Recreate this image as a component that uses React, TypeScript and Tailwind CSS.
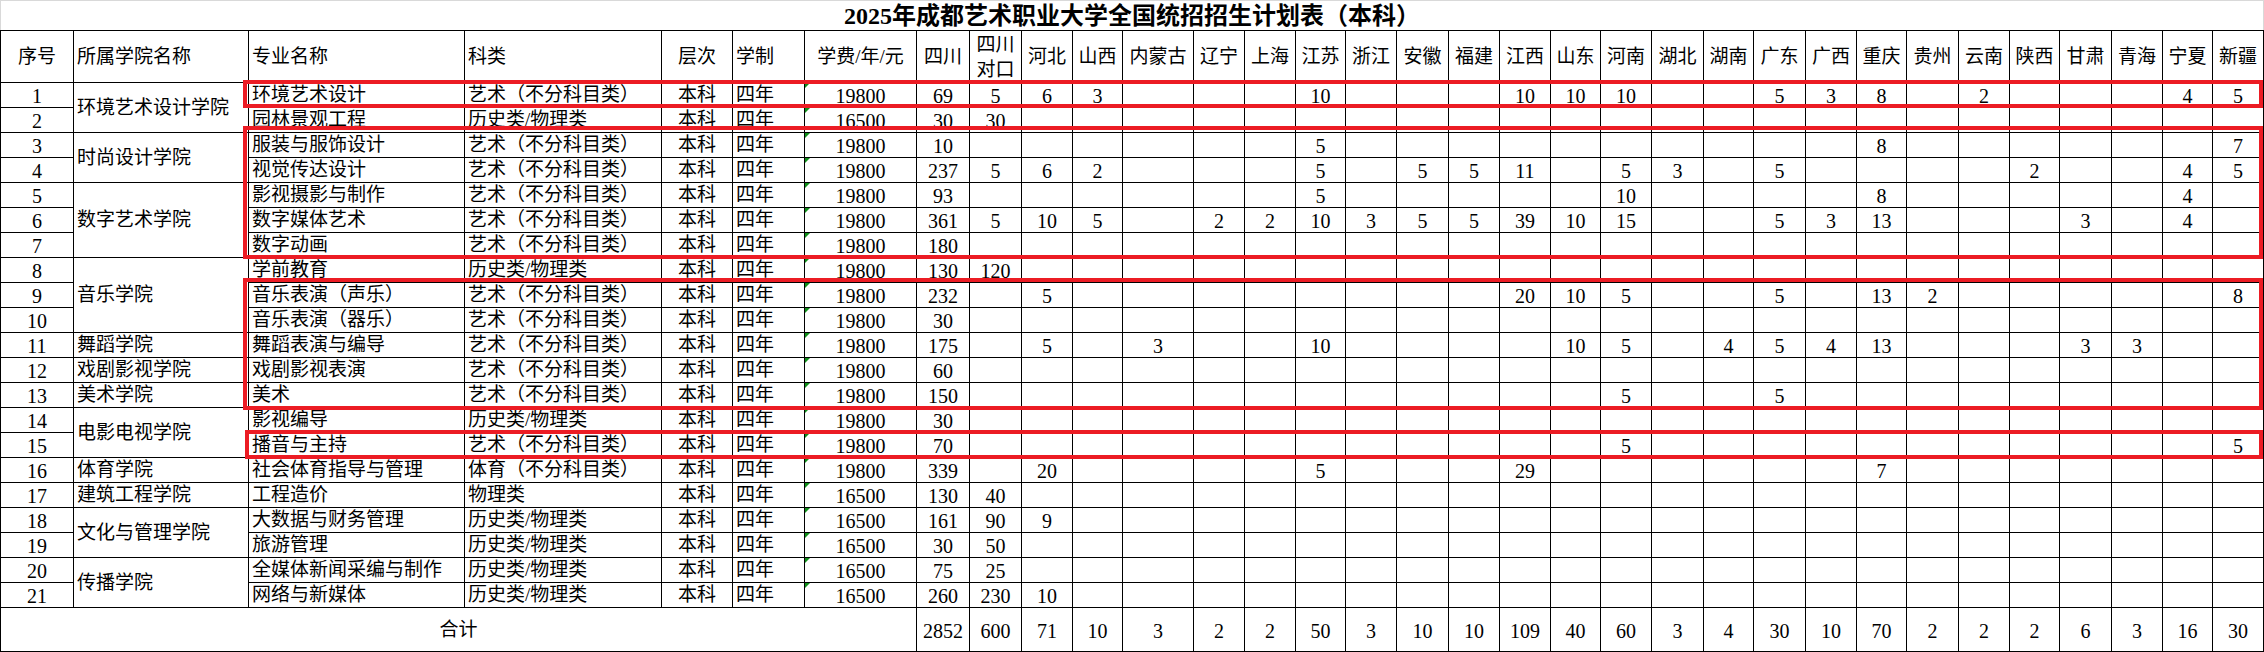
import React from 'react';

const REGIONS = ['河北', '山西', '内蒙古', '辽宁', '上海', '江苏', '浙江', '安徽', '福建', '江西', '山东', '河南', '湖北', '湖南', '广东', '广西', '重庆', '贵州', '云南', '陕西', '甘肃', '青海', '宁夏', '新疆'];

type Row = {
  n: number;
  college?: [string, number];
  major: string;
  type: string;
  fee: string;
  sc?: number;
  dk?: number;
  r?: Record<string, number>;
};

const ART = '艺术（不分科目类）';
const HP = '历史类/物理类';

const ROWS: Row[] = [
  { n: 1, college: ['环境艺术设计学院', 2], major: '环境艺术设计', type: ART, fee: '19800', sc: 69, dk: 5, r: { 河北: 6, 山西: 3, 江苏: 10, 江西: 10, 山东: 10, 河南: 10, 广东: 5, 广西: 3, 重庆: 8, 云南: 2, 宁夏: 4, 新疆: 5 } },
  { n: 2, major: '园林景观工程', type: HP, fee: '16500', sc: 30, dk: 30 },
  { n: 3, college: ['时尚设计学院', 2], major: '服装与服饰设计', type: ART, fee: '19800', sc: 10, r: { 江苏: 5, 重庆: 8, 新疆: 7 } },
  { n: 4, major: '视觉传达设计', type: ART, fee: '19800', sc: 237, dk: 5, r: { 河北: 6, 山西: 2, 江苏: 5, 安徽: 5, 福建: 5, 江西: 11, 河南: 5, 湖北: 3, 广东: 5, 陕西: 2, 宁夏: 4, 新疆: 5 } },
  { n: 5, college: ['数字艺术学院', 3], major: '影视摄影与制作', type: ART, fee: '19800', sc: 93, r: { 江苏: 5, 河南: 10, 重庆: 8, 宁夏: 4 } },
  { n: 6, major: '数字媒体艺术', type: ART, fee: '19800', sc: 361, dk: 5, r: { 河北: 10, 山西: 5, 辽宁: 2, 上海: 2, 江苏: 10, 浙江: 3, 安徽: 5, 福建: 5, 江西: 39, 山东: 10, 河南: 15, 广东: 5, 广西: 3, 重庆: 13, 甘肃: 3, 宁夏: 4 } },
  { n: 7, major: '数字动画', type: ART, fee: '19800', sc: 180 },
  { n: 8, college: ['音乐学院', 3], major: '学前教育', type: HP, fee: '19800', sc: 130, dk: 120 },
  { n: 9, major: '音乐表演（声乐）', type: ART, fee: '19800', sc: 232, r: { 河北: 5, 江西: 20, 山东: 10, 河南: 5, 广东: 5, 重庆: 13, 贵州: 2, 新疆: 8 } },
  { n: 10, major: '音乐表演（器乐）', type: ART, fee: '19800', sc: 30 },
  { n: 11, college: ['舞蹈学院', 1], major: '舞蹈表演与编导', type: ART, fee: '19800', sc: 175, r: { 河北: 5, 内蒙古: 3, 江苏: 10, 山东: 10, 河南: 5, 湖南: 4, 广东: 5, 广西: 4, 重庆: 13, 甘肃: 3, 青海: 3 } },
  { n: 12, college: ['戏剧影视学院', 1], major: '戏剧影视表演', type: ART, fee: '19800', sc: 60 },
  { n: 13, college: ['美术学院', 1], major: '美术', type: ART, fee: '19800', sc: 150, r: { 河南: 5, 广东: 5 } },
  { n: 14, college: ['电影电视学院', 2], major: '影视编导', type: HP, fee: '19800', sc: 30 },
  { n: 15, major: '播音与主持', type: ART, fee: '19800', sc: 70, r: { 河南: 5, 新疆: 5 } },
  { n: 16, college: ['体育学院', 1], major: '社会体育指导与管理', type: '体育（不分科目类）', fee: '19800', sc: 339, r: { 河北: 20, 江苏: 5, 江西: 29, 重庆: 7 } },
  { n: 17, college: ['建筑工程学院', 1], major: '工程造价', type: '物理类', fee: '16500', sc: 130, dk: 40 },
  { n: 18, college: ['文化与管理学院', 2], major: '大数据与财务管理', type: HP, fee: '16500', sc: 161, dk: 90, r: { 河北: 9 } },
  { n: 19, major: '旅游管理', type: HP, fee: '16500', sc: 30, dk: 50 },
  { n: 20, college: ['传播学院', 2], major: '全媒体新闻采编与制作', type: HP, fee: '16500', sc: 75, dk: 25 },
  { n: 21, major: '网络与新媒体', type: HP, fee: '16500', sc: 260, dk: 230, r: { 河北: 10 } },
];

const TOTALS = [2852, 600, 71, 10, 3, 2, 2, 50, 3, 10, 10, 109, 40, 60, 3, 4, 30, 10, 70, 2, 2, 2, 6, 3, 16, 30];

const B = 'border-r border-b border-black flex items-center overflow-hidden whitespace-nowrap';
const TXT = `${B} text-[19px] leading-[22px]`;
const TXT_L = `${TXT} pl-[3px]`;
const TXT_C = `${TXT} justify-center`;
const NUM = `${B} justify-center text-[20px] leading-[22px] pt-[2px]`;

function Mark() {
  return <span className="absolute left-0 top-0 w-0 h-0 border-t-[5px] border-r-[5px] border-t-[#0f8f1a] border-r-transparent" />;
}

function RedBox({ cls }: { cls: string }) {
  return <div className={`absolute border-4 border-[#ec1c24] pointer-events-none ${cls}`} />;
}

export default function App() {
  return (
    <div className="relative w-[2264px] h-[652px] bg-white text-black overflow-hidden [text-spacing-trim:space-all] font-['Liberation_Serif','Noto_Sans_CJK_SC',serif]">
      <div className="h-[30px] border-t border-x border-[#d9d9d9] flex items-center justify-center text-[24px] font-bold leading-[28px] pt-[1px]">
        2025年成都艺术职业大学全国统招招生计划表（本科）
      </div>
      <div className="grid border-t border-l border-black grid-cols-[73px_175px_216px_197px_71px_72px_112px_53px_52px_51px_50px_71px_51px_51px_50px_51px_52px_51px_51px_50px_51px_52px_50px_52px_51px_50px_52px_51px_50px_52px_51px_50px_51px] grid-rows-[52px_repeat(21,25px)_44px]">
        {/* header */}
        <div className={TXT_C}>序号</div>
        <div className={TXT_L}>所属学院名称</div>
        <div className={TXT_L}>专业名称</div>
        <div className={TXT_L}>科类</div>
        <div className={TXT_C}>层次</div>
        <div className={TXT_L}>学制</div>
        <div className={TXT_C}>学费/年/元</div>
        <div className={TXT_C}>四川</div>
        <div className={`${B} justify-center text-[19px] leading-[25px] text-center whitespace-normal`}>
          <span>四川<br />对口</span>
        </div>
        {REGIONS.map((r) => (
          <div key={r} className={TXT_C}>{r}</div>
        ))}

        {/* rows */}
        {ROWS.map((row) => (
          <React.Fragment key={row.n}>
            <div className={NUM}>{row.n}</div>
            {row.college && (
              <div
                className={`${TXT_L} ${row.college[1] === 3 ? 'row-span-3' : row.college[1] === 2 ? 'row-span-2' : ''}`}
              >
                {row.college[0]}
              </div>
            )}
            <div className={TXT_L}>{row.major}</div>
            <div className={TXT_L}>{row.type}</div>
            <div className={TXT_C}>本科</div>
            <div className={TXT_L}>四年</div>
            <div className={`${NUM} relative`}>
              <Mark />
              {row.fee}
            </div>
            <div className={NUM}>{row.sc ?? ''}</div>
            <div className={NUM}>{row.dk ?? ''}</div>
            {REGIONS.map((r) => (
              <div key={r} className={NUM}>{row.r && row.r[r] !== undefined ? row.r[r] : ''}</div>
            ))}
          </React.Fragment>
        ))}

        {/* total */}
        <div className={`${TXT_C} col-span-7`}>合计</div>
        {TOTALS.map((t, i) => (
          <div key={i} className={NUM}>{t}</div>
        ))}
      </div>

      <RedBox cls="left-[243px] top-[80px] w-[2020px] h-[28px]" />
      <RedBox cls="left-[243px] top-[126px] w-[2020px] h-[133px]" />
      <RedBox cls="left-[243px] top-[278px] w-[2020px] h-[132px]" />
      <RedBox cls="left-[245px] top-[430px] w-[2018px] h-[29px]" />
    </div>
  );
}
